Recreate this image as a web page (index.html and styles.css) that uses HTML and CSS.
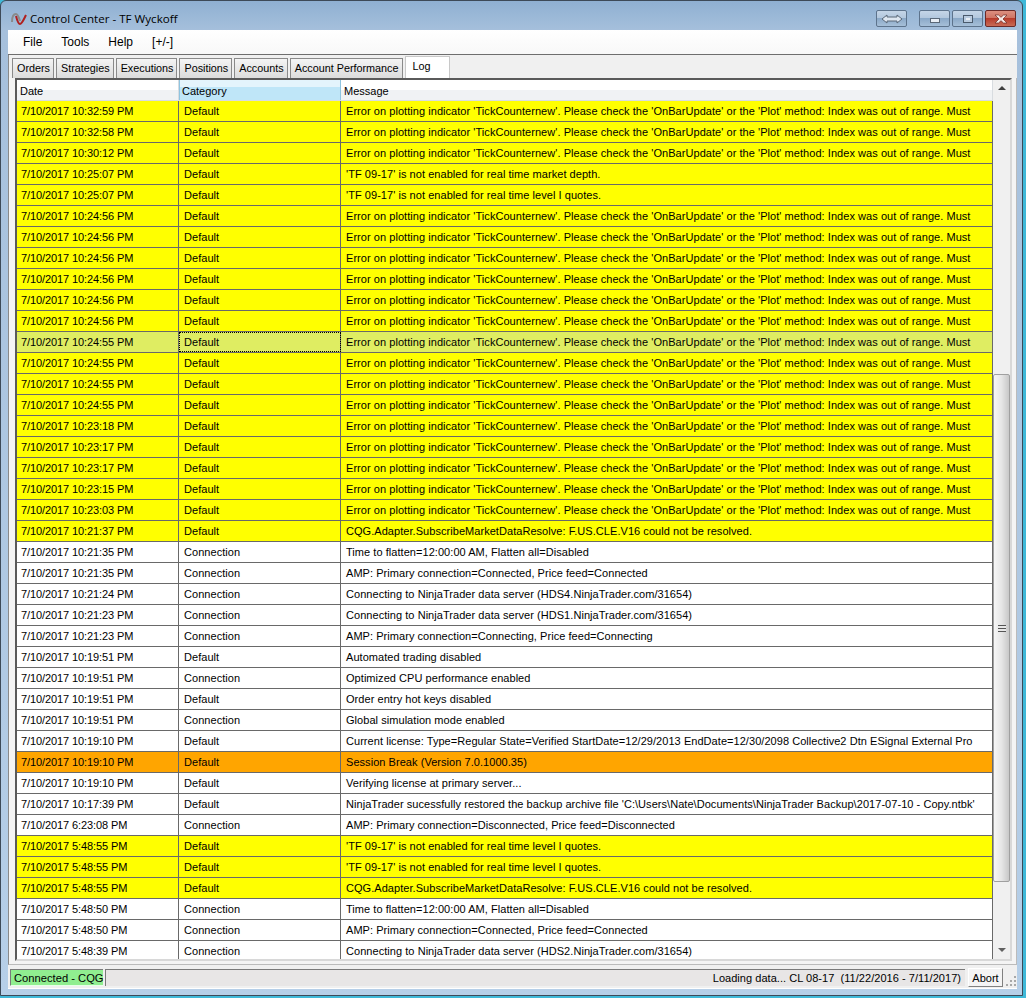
FILE: index.html
```html
<!DOCTYPE html>
<html lang="en">
  <head>
    <meta charset="UTF-8" />
    <title>Control Center - TF Wyckoff</title>
    <link rel="stylesheet" href="styles.css">
  </head>
  <body>
    <div id="window">
      <div id="titlebar">
        <svg class="logo" width="16" height="12" viewBox="0 0 16 12">
          <path d="M1 9 C1 3 3 1 5 1 C7 1 8 5 9 8" fill="none" stroke="#8a8a8a" stroke-width="2"/>
          <path d="M5 3 C6 7 7 11 9 11 C11 11 13 6 15 2" fill="none" stroke="#b02020" stroke-width="2"/>
        </svg>
        <span class="title">Control Center - TF Wyckoff</span>
        <div class="caption-btn arrows">
          <svg width="22" height="10" viewBox="0 0 22 10"><path d="M1 5 L6 1 V3 H16 V1 L21 5 L16 9 V7 H6 V9 Z" fill="#dde6f0" stroke="#5a6878"/></svg>
        </div>
        <div class="caption-group">
          <div class="caption-btn min"><span class="glyph-min"></span></div>
          <div class="caption-btn max"><span class="glyph-max"></span></div>
          <div class="caption-btn close">
            <svg width="14" height="10" viewBox="0 0 14 10"><path d="M1 1 H4.5 L7 3.3 L9.5 1 H13 L9 5 L13 9 H9.5 L7 6.7 L4.5 9 H1 L5 5 Z" fill="#f4e8e6" stroke="#6a2a22" stroke-width="0.7"/></svg>
          </div>
        </div>
      </div>
      <div id="client">
        <div id="menu">
          <span>File</span><span>Tools</span><span>Help</span><span>[+/-]</span>
        </div>
        <div id="tabs">
          <div class="tab">Orders</div>
          <div class="tab">Strategies</div>
          <div class="tab">Executions</div>
          <div class="tab">Positions</div>
          <div class="tab">Accounts</div>
          <div class="tab">Account Performance</div>
          <div class="tab active">Log</div>
        </div>
        <div id="page">
          <div id="grid">
            <div id="table">
              <div class="head">
                <div>Date</div>
                <div class="sorted">Category</div>
                <div>Message</div>
              </div>
              <div class="row warn"><div>7/10/2017 10:32:59 PM</div><div>Default</div><div>Error on plotting indicator 'TickCounternew'. Please check the 'OnBarUpdate' or the 'Plot' method: Index was out of range. Must</div></div>
              <div class="row warn"><div>7/10/2017 10:32:58 PM</div><div>Default</div><div>Error on plotting indicator 'TickCounternew'. Please check the 'OnBarUpdate' or the 'Plot' method: Index was out of range. Must</div></div>
              <div class="row warn"><div>7/10/2017 10:30:12 PM</div><div>Default</div><div>Error on plotting indicator 'TickCounternew'. Please check the 'OnBarUpdate' or the 'Plot' method: Index was out of range. Must</div></div>
              <div class="row warn"><div>7/10/2017 10:25:07 PM</div><div>Default</div><div>'TF 09-17' is not enabled for real time market depth.</div></div>
              <div class="row warn"><div>7/10/2017 10:25:07 PM</div><div>Default</div><div>'TF 09-17' is not enabled for real time level I quotes.</div></div>
              <div class="row warn"><div>7/10/2017 10:24:56 PM</div><div>Default</div><div>Error on plotting indicator 'TickCounternew'. Please check the 'OnBarUpdate' or the 'Plot' method: Index was out of range. Must</div></div>
              <div class="row warn"><div>7/10/2017 10:24:56 PM</div><div>Default</div><div>Error on plotting indicator 'TickCounternew'. Please check the 'OnBarUpdate' or the 'Plot' method: Index was out of range. Must</div></div>
              <div class="row warn"><div>7/10/2017 10:24:56 PM</div><div>Default</div><div>Error on plotting indicator 'TickCounternew'. Please check the 'OnBarUpdate' or the 'Plot' method: Index was out of range. Must</div></div>
              <div class="row warn"><div>7/10/2017 10:24:56 PM</div><div>Default</div><div>Error on plotting indicator 'TickCounternew'. Please check the 'OnBarUpdate' or the 'Plot' method: Index was out of range. Must</div></div>
              <div class="row warn"><div>7/10/2017 10:24:56 PM</div><div>Default</div><div>Error on plotting indicator 'TickCounternew'. Please check the 'OnBarUpdate' or the 'Plot' method: Index was out of range. Must</div></div>
              <div class="row warn"><div>7/10/2017 10:24:56 PM</div><div>Default</div><div>Error on plotting indicator 'TickCounternew'. Please check the 'OnBarUpdate' or the 'Plot' method: Index was out of range. Must</div></div>
              <div class="row selected"><div>7/10/2017 10:24:55 PM</div><div class="focus">Default</div><div>Error on plotting indicator 'TickCounternew'. Please check the 'OnBarUpdate' or the 'Plot' method: Index was out of range. Must</div></div>
              <div class="row warn"><div>7/10/2017 10:24:55 PM</div><div>Default</div><div>Error on plotting indicator 'TickCounternew'. Please check the 'OnBarUpdate' or the 'Plot' method: Index was out of range. Must</div></div>
              <div class="row warn"><div>7/10/2017 10:24:55 PM</div><div>Default</div><div>Error on plotting indicator 'TickCounternew'. Please check the 'OnBarUpdate' or the 'Plot' method: Index was out of range. Must</div></div>
              <div class="row warn"><div>7/10/2017 10:24:55 PM</div><div>Default</div><div>Error on plotting indicator 'TickCounternew'. Please check the 'OnBarUpdate' or the 'Plot' method: Index was out of range. Must</div></div>
              <div class="row warn"><div>7/10/2017 10:23:18 PM</div><div>Default</div><div>Error on plotting indicator 'TickCounternew'. Please check the 'OnBarUpdate' or the 'Plot' method: Index was out of range. Must</div></div>
              <div class="row warn"><div>7/10/2017 10:23:17 PM</div><div>Default</div><div>Error on plotting indicator 'TickCounternew'. Please check the 'OnBarUpdate' or the 'Plot' method: Index was out of range. Must</div></div>
              <div class="row warn"><div>7/10/2017 10:23:17 PM</div><div>Default</div><div>Error on plotting indicator 'TickCounternew'. Please check the 'OnBarUpdate' or the 'Plot' method: Index was out of range. Must</div></div>
              <div class="row warn"><div>7/10/2017 10:23:15 PM</div><div>Default</div><div>Error on plotting indicator 'TickCounternew'. Please check the 'OnBarUpdate' or the 'Plot' method: Index was out of range. Must</div></div>
              <div class="row warn"><div>7/10/2017 10:23:03 PM</div><div>Default</div><div>Error on plotting indicator 'TickCounternew'. Please check the 'OnBarUpdate' or the 'Plot' method: Index was out of range. Must</div></div>
              <div class="row warn"><div>7/10/2017 10:21:37 PM</div><div>Default</div><div>CQG.Adapter.SubscribeMarketDataResolve: F.US.CLE.V16 could not be resolved.</div></div>
              <div class="row"><div>7/10/2017 10:21:35 PM</div><div>Connection</div><div>Time to flatten=12:00:00 AM, Flatten all=Disabled</div></div>
              <div class="row"><div>7/10/2017 10:21:35 PM</div><div>Connection</div><div>AMP: Primary connection=Connected, Price feed=Connected</div></div>
              <div class="row"><div>7/10/2017 10:21:24 PM</div><div>Connection</div><div>Connecting to NinjaTrader data server (HDS4.NinjaTrader.com/31654)</div></div>
              <div class="row"><div>7/10/2017 10:21:23 PM</div><div>Connection</div><div>Connecting to NinjaTrader data server (HDS1.NinjaTrader.com/31654)</div></div>
              <div class="row"><div>7/10/2017 10:21:23 PM</div><div>Connection</div><div>AMP: Primary connection=Connecting, Price feed=Connecting</div></div>
              <div class="row"><div>7/10/2017 10:19:51 PM</div><div>Default</div><div>Automated trading disabled</div></div>
              <div class="row"><div>7/10/2017 10:19:51 PM</div><div>Connection</div><div>Optimized CPU performance enabled</div></div>
              <div class="row"><div>7/10/2017 10:19:51 PM</div><div>Default</div><div>Order entry hot keys disabled</div></div>
              <div class="row"><div>7/10/2017 10:19:51 PM</div><div>Connection</div><div>Global simulation mode enabled</div></div>
              <div class="row"><div>7/10/2017 10:19:10 PM</div><div>Default</div><div>Current license: Type=Regular State=Verified StartDate=12/29/2013 EndDate=12/30/2098 Collective2 Dtn ESignal External Pro</div></div>
              <div class="row session"><div>7/10/2017 10:19:10 PM</div><div>Default</div><div>Session Break (Version 7.0.1000.35)</div></div>
              <div class="row"><div>7/10/2017 10:19:10 PM</div><div>Default</div><div>Verifying license at primary server...</div></div>
              <div class="row"><div>7/10/2017 10:17:39 PM</div><div>Default</div><div>NinjaTrader sucessfully restored the backup archive file 'C:\Users\Nate\Documents\NinjaTrader Backup\2017-07-10 - Copy.ntbk'</div></div>
              <div class="row"><div>7/10/2017 6:23:08 PM</div><div>Connection</div><div>AMP: Primary connection=Disconnected, Price feed=Disconnected</div></div>
              <div class="row warn"><div>7/10/2017 5:48:55 PM</div><div>Default</div><div>'TF 09-17' is not enabled for real time level I quotes.</div></div>
              <div class="row warn"><div>7/10/2017 5:48:55 PM</div><div>Default</div><div>'TF 09-17' is not enabled for real time level I quotes.</div></div>
              <div class="row warn"><div>7/10/2017 5:48:55 PM</div><div>Default</div><div>CQG.Adapter.SubscribeMarketDataResolve: F.US.CLE.V16 could not be resolved.</div></div>
              <div class="row"><div>7/10/2017 5:48:50 PM</div><div>Connection</div><div>Time to flatten=12:00:00 AM, Flatten all=Disabled</div></div>
              <div class="row"><div>7/10/2017 5:48:50 PM</div><div>Connection</div><div>AMP: Primary connection=Connected, Price feed=Connected</div></div>
              <div class="row"><div>7/10/2017 5:48:39 PM</div><div>Connection</div><div>Connecting to NinjaTrader data server (HDS2.NinjaTrader.com/31654)</div></div>
            </div>
            <div id="scrollbar">
              <div class="arrow up"></div>
              <div class="track-top"></div>
              <div class="thumb"><span class="grip"></span></div>
              <div class="track-bottom"></div>
              <div class="arrow down"></div>
            </div>
          </div>
        </div>
        <div id="status">
          <div class="connected">Connected - CQG</div>
          <div class="progress">Loading data... CL 08-17&nbsp; (11/22/2016 - 7/11/2017)</div>
          <div class="abort">Abort</div>
          <svg class="sizer" width="12" height="12" viewBox="0 0 12 12" fill="#a8a8a8">
            <rect x="9" y="1" width="2" height="2"/><rect x="5" y="5" width="2" height="2"/><rect x="9" y="5" width="2" height="2"/><rect x="1" y="9" width="2" height="2"/><rect x="5" y="9" width="2" height="2"/><rect x="9" y="9" width="2" height="2"/>
          </svg>
        </div>
      </div>
    </div>
  </body>
</html>
```

FILE: styles.css
```css
* {
  margin: 0;
  padding: 0;
  box-sizing: border-box;
}
html, body {
  height: 100%;
  overflow: hidden;
}
body {
  font-family: "Liberation Sans", Arial, sans-serif;
  font-size: 11px;
  color: #000;
  background: #3fb8d8;
}
#window {
  width: 1023px;
  height: 996px;
  display: flex;
  flex-direction: column;
  padding: 0 5px 6px 7px;
  border: 1px solid #3d4a58;
  border-radius: 6px 6px 0 0;
  background: linear-gradient(#8fb0d2 0, #a6c0dc 30px, #b6cfe8 100%);
}
#titlebar {
  height: 29px;
  flex: none;
  display: flex;
  align-items: center;
  padding-top: 6px;
}
#titlebar .logo {
  margin: 0 3px 0 3px;
}
#titlebar .title {
  font-family: "Open Sans", sans-serif;
  font-size: 11.6px;
  flex: 1;
}
.caption-btn {
  height: 17px;
  display: flex;
  align-items: center;
  justify-content: center;
  border: 1px solid #5d738c;
  border-radius: 2px;
  background: linear-gradient(#c4d5e7 0, #b3c8de 45%, #8ba9c8 50%, #a6bfd8 100%);
}
.arrows {
  width: 31px;
  margin-right: 12px;
}
.caption-group {
  display: flex;
  gap: 2px;
  margin-right: 1px;
}
.min, .max {
  width: 31px;
}
.close {
  width: 31px;
  border-color: #6a2a28;
  background: linear-gradient(#dc8f80 0, #cf7565 45%, #b83c2c 50%, #c96a55 100%);
}
.glyph-min {
  width: 10px;
  height: 5px;
  margin-top: 3px;
  background: #e8eef5;
  border: 1px solid #5a6878;
}
.glyph-max {
  width: 10px;
  height: 8px;
  background: #e8eef5;
  border: 1px solid #4a5a6c;
  box-shadow: inset 0 0 0 2px #b9cbdf;
}
#client {
  flex: 1;
  display: flex;
  flex-direction: column;
  min-height: 0;
  background: #f0f0f0;
}
#menu {
  height: 25px;
  flex: none;
  display: flex;
  align-items: center;
  gap: 19px;
  padding-left: 15px;
  font-size: 12px;
  background: linear-gradient(#fff, #f8f8f8);
  border-bottom: 1px solid #6e6e6e;
}
#tabs {
  height: 23px;
  flex: none;
  display: flex;
  align-items: flex-end;
  padding: 0 0 0 3px;
  border-left: 1px solid #8a8a8a;
  background: #f0f0f0;
}
.tab {
  height: 20px;
  padding: 3px 3px 0 4px;
  margin-right: 2px;
  font-size: 10.8px;
  white-space: nowrap;
  background: linear-gradient(#f4f4f4, #dcdcdc);
  border: 1px solid #8a8a8a;
  border-bottom: none;
}
.tab.active {
  height: 22px;
  width: 45px;
  margin: 0;
  padding: 3px 0 0 7px;
  background: #fff;
  border-color: #c8c8c8;
}
#page {
  flex: 1;
  min-height: 0;
  padding: 0 4px 0 6px;
  border-left: 1px solid #8a8a8a;
  border-right: 1px solid #bbb;
  border-bottom: 1px solid #bbb;
  background: #f4f4f4;
}
#grid {
  height: 883px;
  display: flex;
  border-top: 2px solid #5a5a5a;
  border-left: 2px solid #5a5a5a;
  border-bottom: 2px solid #d8d8d8;
  border-right: 2px solid #d8d8d8;
  background: #fff;
}
#table {
  width: 976px;
  flex: none;
  overflow: hidden;
}
.head {
  height: 21px;
  display: grid;
  grid-template-columns: 162px 162px 1fr;
  font-size: 11px;
  background: linear-gradient(#fff 50%, #f0f2f4 50%);
  border-bottom: 1px solid #d8dce0;
}
.head div {
  padding: 5px 0 0 3px;
  border-right: 1px solid #d8dce0;
}
.head .sorted {
  padding-left: 2px;
  background: linear-gradient(#e4f4fc 35%, #bfe6f8 35%);
  border-left: 1px solid #8fc4e0;
  border-right: 1px solid #8fc4e0;
}
.row {
  height: 21px;
  display: grid;
  grid-template-columns: 162px 162px 1fr;
  letter-spacing: 0.05px;
  border-bottom: 1px solid #696969;
  background: #fff;
}
.row div {
  padding: 4px 0 0 5px;
  border-right: 1px solid #696969;
  white-space: nowrap;
  overflow: hidden;
}
.row div:first-child {
  padding-left: 4px;
  letter-spacing: -0.1px;
}
.row.warn {
  background: #ffff00;
}
.row.selected {
  background: #dfed62;
}
.row.session {
  background: #ffa500;
}
.row .focus {
  outline: 1px dotted #000;
  outline-offset: -1px;
}
#scrollbar {
  width: 17px;
  flex: none;
  display: flex;
  flex-direction: column;
  background: #f0f0f0;
}
.arrow {
  height: 17px;
  flex: none;
  position: relative;
}
.arrow::after {
  content: "";
  position: absolute;
  left: 5px;
  top: 6px;
  border-left: 4px solid transparent;
  border-right: 4px solid transparent;
}
.arrow.up::after {
  border-bottom: 4px solid #404040;
}
.arrow.down::after {
  border-top: 4px solid #606060;
}
.track-top {
  height: 277px;
  flex: none;
}
.thumb {
  flex: none;
  height: 508px;
  display: flex;
  align-items: center;
  justify-content: center;
  border: 1px solid #a0a0a0;
  border-radius: 2px;
  background: linear-gradient(90deg, #f6f6f6, #e6e6e6 50%, #c8c8c8);
}
.grip {
  width: 8px;
  height: 7px;
  background: repeating-linear-gradient(#555 0 1px, #e8e8e8 1px 3px);
}
.track-bottom {
  flex: 1;
}
#status {
  height: 24px;
  flex: none;
  display: flex;
  align-items: center;
  padding: 2px 0 0 2px;
  background: #f0f0f0;
  border-bottom: 1px solid #fff;
}
.connected {
  width: 93px;
  height: 17px;
  flex: none;
  padding: 2px 0 0 3px;
  white-space: nowrap;
  background: #90ee90;
  border-top: 1px solid #7a7a7a;
  border-left: 1px solid #7a7a7a;
  border-bottom: 1px solid #e8ffe8;
  font-size: 11.2px;
}
.progress {
  flex: 1;
  height: 17px;
  margin-left: 2px;
  padding: 2px 4px 0 0;
  text-align: right;
  white-space: nowrap;
  letter-spacing: 0.04px;
  background: #e8e6e6;
  border-top: 1px solid #7a7a7a;
  border-left: 1px solid #7a7a7a;
}
.abort {
  width: 35px;
  height: 19px;
  flex: none;
  margin-left: 3px;
  padding-top: 3px;
  text-align: center;
  background: #f4f4f4;
  border-right: 1px solid #808080;
  border-bottom: 1px solid #808080;
  border-top: 1px solid #fff;
  border-left: 1px solid #fff;
}
.sizer {
  flex: none;
  margin: 6px 0 0 2px;
}
```
